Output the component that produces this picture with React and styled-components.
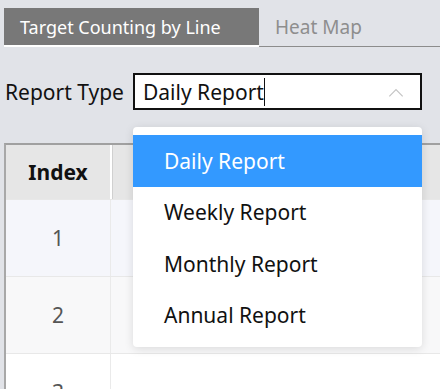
import React from 'react';
import styled, { createGlobalStyle } from 'styled-components';

const GlobalStyle = createGlobalStyle`
    html, body {
        margin: 0;
        padding: 0;
        background: #e1e3e8;
        font-family: 'Noto Sans', 'Open Sans', sans-serif;
        overflow: hidden;
    }
`;

const options = ['Daily Report', 'Weekly Report', 'Monthly Report', 'Annual Report'];

const rows = [
    { index: 1, bg: '#f5f6fb' },
    { index: 2, bg: '#f8f8f9' },
    { index: 3, bg: '#ffffff' },
];

export default function App() {
    return (
        <Page>
            <GlobalStyle />
            <TabBar>
                <Tab active>Target Counting by Line</Tab>
                <Tab>Heat Map</Tab>
            </TabBar>

            <FilterRow>
                <Label>Report Type</Label>
                <SelectBox>
                    <SelectText>Daily Report</SelectText>
                    <Caret />
                    <Chevron viewBox='0 0 20 12'>
                        <path d='M2 10 L10 2 L18 10' />
                    </Chevron>
                </SelectBox>
            </FilterRow>

            <Table>
                <HeadRow>
                    <IndexCell head>Index</IndexCell>
                    <Cell head />
                </HeadRow>
                {rows.map(r => (
                    <BodyRow key={r.index} bg={r.bg}>
                        <IndexCell>{r.index}</IndexCell>
                        <Cell />
                    </BodyRow>
                ))}
            </Table>

            <Dropdown>
                {options.map((o, i) => (
                    <Option key={o} selected={i === 0}>{o}</Option>
                ))}
            </Dropdown>
        </Page>
    );
}

const Page = styled.div`
    position: relative;
    width: 440px;
    height: 389px;
    padding-top: 8px;
    box-sizing: border-box;
    overflow: hidden;
`;

const TabBar = styled.div`
    display: flex;
    margin-left: 4px;
    height: 38px;
    border-bottom: 1px solid #8c8c8c;
`;

const Tab = styled.div`
    display: flex;
    align-items: center;
    padding: 0 16px;
    font-size: ${p => (p.active ? '18px' : '19px')};
    height: 37px;
    color: ${p => (p.active ? '#ffffff' : '#8e8e8e')};
    background: ${p => (p.active ? '#787878' : 'transparent')};
    border-bottom: ${p => (p.active ? '2px solid #ffffff' : 'none')};
    margin-bottom: ${p => (p.active ? '-1px' : '0')};
    width: ${p => (p.active ? '223px' : 'auto')};
`;

const FilterRow = styled.div`
    display: flex;
    align-items: center;
    margin-top: 25px;
    padding-left: 5px;
    height: 39px;
`;

const Label = styled.span`
    font-size: 21px;
    color: #111;
    width: 128px;
    white-space: nowrap;
`;

const SelectBox = styled.div`
    position: relative;
    display: flex;
    align-items: center;
    width: 289px;
    height: 37px;
    box-sizing: border-box;
    border: 2px solid #111;
    background: #fff;
    padding-left: 8px;
`;

const SelectText = styled.span`
    font-size: 21px;
    color: #111;
`;

const Caret = styled.span`
    display: inline-block;
    width: 1.5px;
    height: 28px;
    background: #111;
`;

const Chevron = styled.svg`
    position: absolute;
    right: 15px;
    top: 13px;
    width: 18px;
    height: 10px;
    fill: none;
    stroke: #c4c4c4;
    stroke-width: 1.4;
`;

const Table = styled.div`
    margin-top: 32px;
    margin-left: 4px;
    border-left: 2px solid #a8a8a8;
    border-top: 2px solid #a0a0a0;
`;

const HeadRow = styled.div`
    display: flex;
    height: 54px;
    background: #e6e6e6;
`;

const BodyRow = styled.div`
    display: flex;
    height: 76px;
    background: ${p => p.bg};
    border-top: 1px solid #e8e8e8;
`;

const IndexCell = styled.div`
    width: 104px;
    display: flex;
    align-items: center;
    justify-content: center;
    font-size: 21px;
    font-weight: ${p => (p.head ? 700 : 400)};
    color: ${p => (p.head ? '#111' : '#555')};
    border-right: ${p => (p.head ? '2px solid #ffffff' : '1px solid #eaeaea')};
`;

const Cell = styled.div`
    flex: 1;
    border-left: ${p => (p.head ? '1px solid #d0d0d0' : 'none')};
`;

const Dropdown = styled.div`
    position: absolute;
    left: 133px;
    top: 127px;
    width: 289px;
    padding: 8px 0 6px;
    background: #fff;
    border-radius: 4px;
    box-shadow: 0 2px 10px rgba(0, 0, 0, 0.12);
`;

const Option = styled.div`
    height: 51.5px;
    display: flex;
    align-items: center;
    padding-left: 31px;
    font-size: 21px;
    color: ${p => (p.selected ? '#ffffff' : '#111')};
    background: ${p => (p.selected ? '#3399ff' : 'transparent')};
`;
